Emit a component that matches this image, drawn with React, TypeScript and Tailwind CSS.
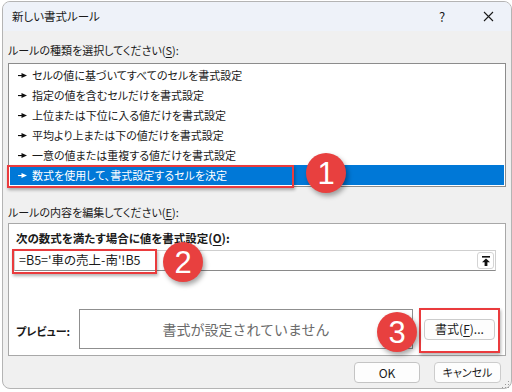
import React from 'react';

const rules = [
  'セルの値に基づいてすべてのセルを書式設定',
  '指定の値を含むセルだけを書式設定',
  '上位または下位に入る値だけを書式設定',
  '平均より上または下の値だけを書式設定',
  '一意の値または重複する値だけを書式設定',
  '数式を使用して、書式設定するセルを決定',
];

function Pointer({ white }: { white?: boolean }) {
  const c = white ? '#ffffff' : '#111111';
  return (
    <svg width="9" height="5" viewBox="0 0 9 5" className="shrink-0">
      <rect x="0" y="2" width="5" height="1.1" fill={c} />
      <polygon points="3.5,0 9,2.5 3.5,5" fill={c} />
    </svg>
  );
}

function Badge({ n, className }: { n: string; className: string }) {
  return (
    <div
      className={`absolute w-[40px] h-[40px] rounded-full bg-[#e8403f] shadow-[2px_3px_5px_rgba(0,0,0,0.35)] flex items-center justify-center text-white text-[31px] leading-none font-['Liberation_Sans',sans-serif] ${className}`}
    >
      {n}
    </div>
  );
}

export default function App() {
  return (
    <div className="relative w-[512px] h-[392px] bg-white overflow-hidden text-[#1a1a1a] text-[11px] font-['Noto_Sans_CJK_JP','Noto_Sans',sans-serif] [font-feature-settings:'palt']">
      <div className="ml-[2px] mt-[1px] w-[510px] h-[388px] rounded-lg border border-[#b4b4b4] bg-[#f0f0f0] overflow-hidden flex flex-col">
        {/* title bar */}
        <div className="h-[29px] bg-[#eef2f9] flex items-center shrink-0">
          <span className="pl-[9px] leading-none text-[11.5px]">新しい書式ルール</span>
          <div className="ml-auto flex h-full">
            <div className="w-[46px] flex items-center justify-center text-[13px]">?</div>
            <div className="w-[46px] flex items-center justify-center">
              <svg width="11" height="11" viewBox="0 0 11 11">
                <path d="M1 1L10 10M10 1L1 10" stroke="#1a1a1a" strokeWidth="1.1" />
              </svg>
            </div>
          </div>
        </div>

        <div className="px-[5px] flex flex-col">
          <div className="pt-[11px] h-[27px] leading-[16px]">
            ルールの種類を選択してください(<span className="underline underline-offset-2">S</span>):
          </div>

          {/* rule type list */}
          <div className="mt-[5px] h-[124px] border border-[#8c8c8c] bg-white py-[1px] px-[1px]">
            {rules.map((r, i) => {
              const sel = i === rules.length - 1;
              return (
                <div
                  key={r}
                  className={`h-[20px] flex items-center gap-[5px] pl-[8px] ${sel ? 'bg-[#0078d7] text-white' : ''}`}
                >
                  <Pointer white={sel} />
                  <span>{r}</span>
                </div>
              );
            })}
          </div>

          <div className="mt-[17px] h-[16px] leading-[16px]">
            ルールの内容を編集してください(<span className="underline underline-offset-2">E</span>):
          </div>

          {/* rule description panel */}
          <div className="mt-[3px] h-[133px] border border-[#a8a8a8] bg-white flex flex-col">
            <div className="pt-[6px] pl-[7px] h-[22px] leading-[16px] font-bold text-[11.5px]">
              次の数式を満たす場合に値を書式設定(<span className="underline underline-offset-2">O</span>):
            </div>
            <div className="mt-[4px] ml-[5px] w-[482px] h-[21px] border border-[#cfcfcf] border-b-[#8a8a8a] flex items-center">
              <span className="pl-[4px] text-[12.5px]">=B5='車の売上-南'!B5</span>
              <div className="ml-auto mr-[1px] w-[17px] h-[17px] border border-[#d4d4d4] rounded-[3px] bg-white flex items-center justify-center">
                <svg width="8" height="10" viewBox="0 0 8 10">
                  <rect x="0" y="0" width="8" height="1.6" fill="#111" />
                  <polygon points="4,2.4 8,6.2 5.4,6.2 5.4,10 2.6,10 2.6,6.2 0,6.2" fill="#111" />
                </svg>
              </div>
            </div>
            <div className="mt-[38px] flex items-center h-[40px]">
              <div className="w-[70px] pl-[7px] font-bold pt-[4px]">プレビュー:</div>
              <div className="w-[334px] h-[40px] border border-[#8f8f8f] bg-white flex items-center justify-center text-[#6a6a6a] text-[14px] [font-feature-settings:normal]">
                書式が設定されていません
              </div>
              <button className="ml-[11px] w-[71px] h-[21px] border border-[#cccccc] rounded-[4px] bg-[#fdfdfd] flex items-center justify-center text-[12px]">
                書式(<span className="underline underline-offset-2">F</span>)...
              </button>
            </div>
          </div>

          {/* dialog buttons */}
          <div className="mt-[6px] flex justify-end gap-[14px] pr-[5px]">
            <button className="w-[66px] h-[21px] border border-[#c4c4c4] rounded-[4px] bg-[#fdfdfd] flex items-center justify-center text-[12px]">
              OK
            </button>
            <button className="w-[67px] h-[21px] border border-[#cccccc] rounded-[4px] bg-[#fdfdfd] flex items-center justify-center">
              キャンセル
            </button>
          </div>
        </div>
      </div>

      {/* size grip */}
      <svg className="absolute left-[502px] top-[381px]" width="8" height="8" viewBox="0 0 8 8">
        <rect x="6" y="0" width="1" height="1" fill="#9a9a9a" />
        <rect x="3" y="3" width="1" height="1" fill="#9a9a9a" />
        <rect x="6" y="3" width="1" height="1" fill="#9a9a9a" />
        <rect x="0" y="6" width="1" height="1" fill="#9a9a9a" />
        <rect x="3" y="6" width="1" height="1" fill="#9a9a9a" />
        <rect x="6" y="6" width="1" height="1" fill="#9a9a9a" />
      </svg>

      {/* annotations */}
      <div className="absolute left-[7px] top-[165px] w-[287px] h-[23px] border-[2.5px] border-[#ea3b3d] shadow-[1px_2px_3px_rgba(0,0,0,0.3)]" />
      <div className="absolute left-[12px] top-[249px] w-[145px] h-[25px] border-[2.5px] border-[#ea3b3d] shadow-[1px_2px_3px_rgba(0,0,0,0.3)]" />
      <div className="absolute left-[419px] top-[308px] w-[81px] h-[45px] border-[2.5px] border-[#ea3b3d] shadow-[1px_2px_3px_rgba(0,0,0,0.3)]" />
      <Badge n="1" className="left-[306px] top-[153px]" />
      <Badge n="2" className="left-[163px] top-[242px]" />
      <Badge n="3" className="left-[377px] top-[312px]" />
    </div>
  );
}
